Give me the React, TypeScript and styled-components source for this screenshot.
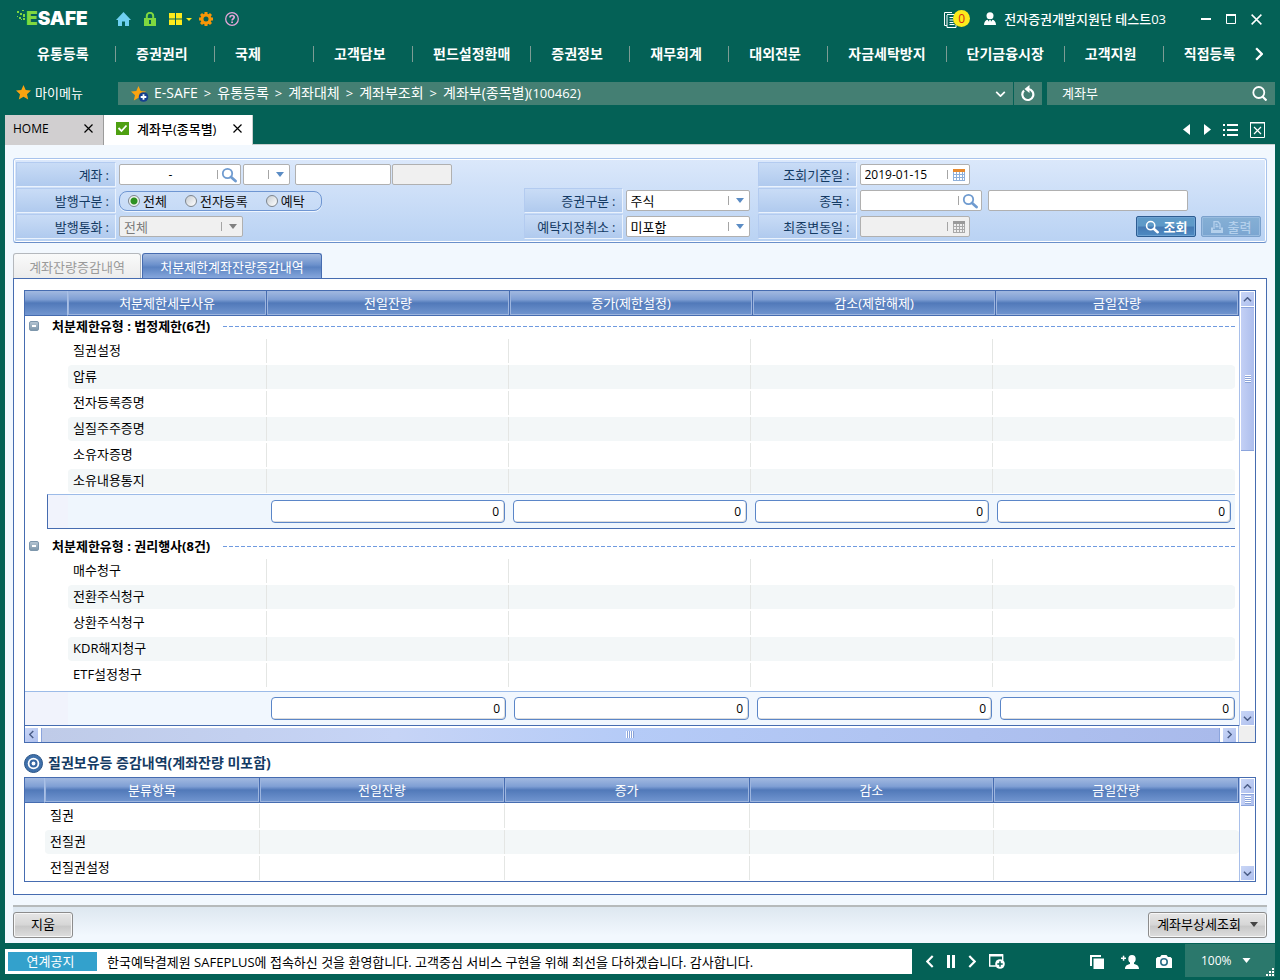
import React from "react";
import styled, { createGlobalStyle, css } from "styled-components";

const c = {
  green: "#046156",
  bar: "#447f73",
  line: "#466cb0",
  canvas: "#f2f8fe",
  stripe: "#f3f7f8",
  navy: "#133a63",
};

const GlobalStyle = createGlobalStyle`
  *, *::before, *::after { box-sizing: border-box; }
  body {
    margin: 0;
    background: ${c.green};
    font-family: "Open Sans", "Noto Sans CJK KR", sans-serif;
    font-size: 13px;
    line-height: 18px;
    color: #000;
  }
  button, input, select { font: inherit; color: inherit; margin: 0; }
  button { padding: 0; border: 0; background: none; cursor: pointer; }
  a { color: inherit; text-decoration: none; }
  svg { display: block; flex: none; }
  table { width: 100%; border-collapse: separate; border-spacing: 0; table-layout: fixed; }
  th, td { padding: 0; font-weight: 400; text-align: left; }
`;

/* ---------- shell ---------- */

const Page = styled.div`
  min-height: 100vh;
  display: flex;
  flex-direction: column;
  background: ${c.green};
`;

const TitleBar = styled.header`
  height: 38px;
  display: flex;
  align-items: center;
  justify-content: space-between;
  padding: 0 18px 0 17px;
  color: #fff;
`;

const Cluster = styled.div<{ $gap: number }>`
  display: flex;
  align-items: center;
  gap: ${(p) => p.$gap}px;
`;

const Logo = styled.a`
  display: flex;
  align-items: center;
  font-family: "Inter", sans-serif;
  font-weight: 900;
  font-size: 19px;
  line-height: 20px;
  color: #fff;
  margin-right: 16px;
  span { color: #7fd83f; }
`;

const IconButton = styled.button`
  display: flex;
  align-items: center;
  justify-content: center;
  gap: 4px;
  color: #fff;
`;

const LayoutButton = styled(IconButton)`
  margin-right: -5px;
`;

const DocsButton = styled(IconButton)`
  position: relative;
  width: 27px;
  height: 18px;
  justify-content: flex-start;
`;

const Badge = styled.span`
  position: absolute;
  right: 1px;
  top: 0;
  width: 17px;
  height: 17px;
  border-radius: 50%;
  background: #fdea1c;
  color: #d62a12;
  font-size: 12px;
  line-height: 17px;
  text-align: center;
`;

const UserName = styled.span`
  font-weight: 500;
  margin: 0 22px 0 -5px;
`;

const MenuBar = styled.nav`
  height: 34px;
  display: flex;
  align-items: center;
  justify-content: space-between;
  padding: 0 17px 2px 17px;
  color: #fff;
`;

const MenuList = styled.ul`
  display: flex;
  margin: 0;
  padding: 0;
  list-style: none;
`;

const MenuItem = styled.li`
  min-width: 99px;
  height: 16px;
  padding: 0 20px;
  border-right: 1px solid #7d9c94;
  font-size: 14px;
  line-height: 16px;
  font-weight: 700;
  white-space: nowrap;
  &:last-child { border-right: 0; min-width: 0; padding-right: 0; }
`;

const PathRow = styled.div`
  display: flex;
  height: 23px;
  margin: 10px 5px 0;
  color: #fff;
`;

const MyMenu = styled.button`
  width: 113px;
  display: flex;
  align-items: center;
  gap: 4px;
  padding: 0 0 2px 11px;
  color: #fff;
`;

const Crumbs = styled.div`
  flex: 1;
  display: flex;
  align-items: center;
  justify-content: space-between;
  background: ${c.bar};
  padding: 0 7px 0 13px;
  font-size: 14px;
`;

const CrumbList = styled.ol`
  display: flex;
  align-items: center;
  gap: 6px;
  margin: 0;
  padding: 0 0 2px;
  list-style: none;
  white-space: nowrap;
  li { display: flex; gap: 6px; }
  li + li::before { content: ">"; font-size: 13px; }
  small { font-size: 13px; }
`;

const Refresh = styled(IconButton)`
  width: 28px;
  margin-left: 1px;
  background: ${c.bar};
`;

const MenuSearch = styled.form`
  width: 228px;
  margin-left: 5px;
  padding: 0 8px 0 15px;
  display: flex;
  align-items: center;
  background: ${c.bar};
  input {
    flex: 1;
    min-width: 0;
    padding: 0 0 2px;
    border: 0;
    background: none;
    outline: none;
  }
`;

const TabStrip = styled.div`
  height: 30px;
  margin: 10px 5px 0;
  display: flex;
  justify-content: space-between;
  border-bottom: 1px solid #c9cfce;
`;

const PageTab = styled.div<{ $active?: boolean }>`
  height: 30px;
  width: ${(p) => (p.$active ? 149 : 99)}px;
  padding: 0 10px 2px ${(p) => (p.$active ? 12 : 8)}px;
  display: flex;
  align-items: center;
  justify-content: space-between;
  background: ${(p) => (p.$active ? "#fff" : "#d1cfd0")};
  border-right: 1px solid ${(p) => (p.$active ? "#c9cfce" : "#9b9b9b")};
  font-size: ${(p) => (p.$active ? 13 : 12)}px;
  font-weight: ${(p) => (p.$active ? 500 : 400)};
  button { color: #000; }
`;

const TabEnd = styled(IconButton)`
  margin-right: 10px;
`;

const Content = styled.main`
  flex: 1;
  display: flex;
  flex-direction: column;
  margin: 0 5px;
  padding: 13px 8px 0;
  background: ${c.canvas};
`;

/* ---------- search panel ---------- */

const Filters = styled.form`
  display: grid;
  grid-template-columns: 100px minmax(0, 1fr) 99px 135px 99px minmax(0, 1fr);
  grid-template-rows: 25px 25px 25px;
  row-gap: 1px;
  height: 85px;
  padding: 3px 2px;
  border: 1px solid #a8c3ec;
  border-bottom-color: #6a8fca;
  border-radius: 3px;
  box-shadow: inset 0 0 0 1px #fff;
  background: linear-gradient(#dbe8fb, #b9d2f3);
`;

const Label = styled.label`
  display: flex;
  align-items: center;
  justify-content: flex-end;
  padding-right: 6px;
  color: ${c.navy};
  background: linear-gradient(#c9dcf6, #b0caee);
  border: 1px solid #b3cbf0;
  border-right-color: #eaf2fd;
  border-bottom-color: #eaf2fd;
  span { margin-left: 3px; }
`;

const Cell = styled.div<{ $span?: number }>`
  display: flex;
  align-items: center;
  padding-left: 3px;
  grid-column: span ${(p) => p.$span ?? 1};
`;

const box = css<{ $off?: boolean }>`
  height: 21px;
  border: 1px solid #b0b0b0;
  border-radius: 2px;
  background: ${(p) => (p.$off ? "#f0f0f0" : "#fff")};
  color: ${(p) => (p.$off ? "#7c7c7c" : "#000")};
`;

const Field = styled.div<{ $w: number; $ml?: number; $off?: boolean }>`
  ${box}
  width: ${(p) => p.$w}px;
  margin-left: ${(p) => p.$ml ?? 0}px;
  display: flex;
  align-items: center;
  position: relative;
  padding-right: 3px;
  input {
    flex: 1;
    min-width: 0;
    height: 19px;
    padding: 0 0 0 4px;
    border: 0;
    background: none;
    outline: none;
    font-size: 12px;
  }
  select {
    width: 100%;
    height: 19px;
    padding: 0 0 0 4px;
    border: 0;
    background: none;
    outline: none;
    appearance: none;
    opacity: 1;
  }
`;

const AccountInput = styled.input`
  text-align: center;
`;

const TextInput = styled.input<{ $w: number; $ml?: number; $off?: boolean }>`
  ${box}
  width: ${(p) => p.$w}px;
  margin-left: ${(p) => p.$ml ?? 0}px;
  padding: 0 4px;
  outline: none;
`;

const Trigger = styled.button`
  display: flex;
  align-items: center;
  gap: 3px;
  height: 17px;
  &::before { content: ""; width: 1px; height: 9px; background: #a5a5a5; }
`;

const DateTrigger = styled(Trigger)`
  gap: 5px;
  padding-right: 1px;
`;

const Arrow = styled.span`
  position: absolute;
  right: 5px;
  top: 5px;
  display: flex;
  align-items: center;
  gap: 7px;
  pointer-events: none;
  &::before { content: ""; width: 1px; height: 9px; background: #a5a5a5; }
`;

const RadioGroup = styled.fieldset`
  display: flex;
  align-items: center;
  gap: 18px;
  width: 203px;
  height: 20px;
  margin: 0;
  padding: 0 0 0 8px;
  border: 1px solid #6f96d2;
  border-radius: 8px;
  box-shadow: 0 1px 0 #eef5fe;
  label { display: flex; align-items: center; gap: 3px; color: #111; }
`;

const Radio = styled.input`
  appearance: none;
  width: 12px;
  height: 12px;
  margin: 0;
  border-radius: 50%;
  border: 1px solid #7d858d;
  background: linear-gradient(135deg, #c7cdd3, #fff);
  &:checked { background: radial-gradient(circle, #2f9121 0 3px, #f1f4f1 4px); }
`;

const ActionButton = styled.button<{ $dim?: boolean }>`
  display: flex;
  align-items: center;
  justify-content: center;
  gap: 5px;
  width: 60px;
  height: 21px;
  border: 1px solid #2d5d92;
  border-radius: 2px;
  box-shadow: inset 0 0 0 1px #6fa3d3;
  background: linear-gradient(#5e9ac8 0 45%, #457ab4 55%, #4f8bc2);
  color: #fff;
  font-weight: 700;
  ${(p) =>
    p.$dim &&
    css`
      border-color: #7ba1cc;
      box-shadow: inset 0 0 0 1px #98bbdf;
      background: linear-gradient(#85b0d5, #7ba5d1);
      color: #b4d0ec;
      font-weight: 500;
    `}
`;

const Actions = styled.div`
  display: flex;
  gap: 5px;
  margin-left: auto;
  padding-right: 3px;
`;

/* ---------- inner tabs + panel ---------- */

const InnerTabs = styled.div`
  display: flex;
  gap: 1px;
  margin-top: 10px;
`;

const InnerTab = styled.button<{ $active?: boolean }>`
  width: ${(p) => (p.$active ? 180 : 128)}px;
  height: 25px;
  padding-top: 2px;
  border: 1px solid #b4b8bd;
  border-bottom: 0;
  border-radius: 3px 3px 0 0;
  background: linear-gradient(#f9fafa, #ececec);
  color: #9a9a9a;
  ${(p) =>
    p.$active &&
    css`
      border-color: ${c.line};
      background: linear-gradient(#a3bae0, #6c91cc 45%, #5a82c1 55%, #86a7dc);
      color: #fff;
    `}
`;

const Panel = styled.section`
  flex: 1;
  padding: 11px 10px 12px;
  border: 1px solid ${c.line};
  background: #fff;
`;

const GridFrame = styled.div`
  display: grid;
  grid-template-columns: minmax(0, 1fr) 16px;
  border: 1px solid ${c.line};
`;

const GridMain = styled.div`
  display: flex;
  flex-direction: column;
  min-width: 0;
`;

const HeadCell = styled.th<{ $first?: boolean }>`
  && { text-align: center; }
  height: 25px;
  background: linear-gradient(#a2b9e0, #7f9fd4 35%, #5179b9 50%, #7296d0);
  border-right: 1px solid ${(p) => (p.$first ? "#a9c0e6" : c.line)};
  border-bottom: 1px solid ${c.line};
  box-shadow: inset ${(p) => (p.$first ? "0 0 0 0" : "0 0 0 1px")} #9db5de;
  color: #fff;
`;

const BodyWrap = styled.div<{ $h?: number }>`
  padding-right: 4px;
  ${(p) => p.$h && `height: ${p.$h}px;`}
`;

const GroupCell = styled.td<{ $gap: number }>`
  && { padding-top: ${(p) => p.$gap}px; padding-left: 4px; }
`;

const GroupTitle = styled.div`
  display: flex;
  align-items: center;
  height: 22px;
  padding-bottom: 2px;
  font-weight: 700;
  span { margin: 0 13px; }
  &::after {
    content: "";
    flex: 1;
    height: 1px;
    background: repeating-linear-gradient(90deg, #6f9ae0 0 4px, #fff 4px 6px);
  }
`;

const Toggle = styled.button`
  width: 10px;
  height: 10px;
  display: flex;
  align-items: center;
  justify-content: center;
  border: 1px solid #7e97ac;
  border-radius: 2px;
  background: linear-gradient(#b4c4d2, #8098ac);
  &::before { content: ""; width: 4px; height: 2px; background: #fff; }
`;

const Row = styled.tr<{ $striped: boolean }>`
  td { height: 26px; padding-bottom: 2px; border: 0 solid #fff; border-width: 1px 0; background-clip: padding-box; }
  td + td { background-color: ${(p) => (p.$striped ? c.stripe : "#fff")}; padding-left: 5px; }
  td + td:nth-child(n + 2):not(:last-child) { box-shadow: inset -1px 0 0 #e4e6e4; }
  td:nth-child(2) { border-radius: 4px 0 0 4px; }
  td:last-child { border-radius: 0 4px 4px 0; }
`;

const SumRow = styled.tr`
  td + td {
    height: 35px;
    padding: 0 4px;
    background: #eff6fd;
    border-top: 1px solid #9cbbe8;
    border-bottom: 1px solid ${c.line};
  }
`;

const SumStart = styled.div`
  height: 35px;
  margin-left: 22px;
  background: #f1f3fc;
  border: 1px solid ${c.line};
  border-top-color: #9cbbe8;
  border-right: 0;
`;

const SumInput = styled.input`
  display: block;
  width: 100%;
  height: 23px;
  padding: 0 5px;
  border: 1px solid #5b86c8;
  border-radius: 4px;
  box-shadow: inset -1px -1px 0 #dcdcdc;
  background: #fff;
  outline: none;
  text-align: right;
  font-size: 12px;
`;

const FootTable = styled.table`
  td {
    height: 35px;
    padding: 0 4px;
    background: #f1f7fe;
    border-top: 1px solid #9cbbe8;
    border-bottom: 1px solid ${c.line};
  }
  td:first-child { background: #f1f3fc; }
`;

/* ---------- scrollbars ---------- */

const VBar = styled.div`
  display: flex;
  flex-direction: column;
  border-left: 1px solid #a9c0ea;
  padding: 1px;
  gap: 1px;
`;

const ScrollButton = styled.button`
  width: 13px;
  height: 14px;
  flex: none;
  display: flex;
  align-items: center;
  justify-content: center;
  background: linear-gradient(135deg, #c9d6f6, #aebfee);
  color: #4a5c86;
`;

const VThumb = styled.div<{ $h: number }>`
  width: 13px;
  height: ${(p) => p.$h}px;
  display: flex;
  align-items: center;
  justify-content: center;
  border: 0 solid #8ba4dc;
  border-width: 1px 0;
  background: linear-gradient(90deg, #c3d0f5, #adbeed);
`;

const Spacer = styled.div`
  flex: 1;
`;

const HBar = styled.div`
  display: flex;
  align-items: center;
  gap: 3px;
  height: 16px;
  padding: 1px 2px 0 0;
  border-right: 1px solid #a9c0ea;
`;

const HThumb = styled.div`
  flex: 1;
  height: 14px;
  display: flex;
  align-items: center;
  justify-content: center;
  border: 0 solid #8ba4dc;
  border-width: 0 1px;
  background: linear-gradient(90deg, #bfcbe8, #c6d4f6 30%, #b5cbf7 50%, #a9baeb);
`;

const Corner = styled.div`
  background: #efefef;
`;

const SectionTitle = styled.h2`
  display: flex;
  align-items: center;
  gap: 5px;
  height: 34px;
  margin: 0;
  padding-top: 6px;
  font-size: 14px;
  font-weight: 700;
  color: ${c.navy};
`;

const CommandBar = styled.div`
  display: flex;
  justify-content: space-between;
  height: 38px;
  margin-top: 10px;
  padding-top: 5px;
  border-top: 2px solid #b6babb;
  background: linear-gradient(#dde7f0, #f2f8fe 80%);
`;

const GrayButton = styled.button<{ $w: number }>`
  width: ${(p) => p.$w}px;
  height: 26px;
  display: flex;
  align-items: center;
  justify-content: center;
  gap: 9px;
  padding-bottom: 2px;
  border: 1px solid #8c8c8c;
  border-radius: 3px;
  box-shadow: inset 0 0 0 1px #f7f7f7;
  background: linear-gradient(#e6e6e6, #d6d6d6 50%, #c8c8c8 55%, #dedede);
`;

/* ---------- status bar ---------- */

const StatusBar = styled.footer`
  display: flex;
  align-items: center;
  height: 37px;
  padding: 0 5px;
  color: #fff;
`;

const Notice = styled.div`
  flex: 1;
  min-width: 0;
  display: flex;
  align-items: center;
  height: 25px;
  padding: 0 3px;
  background: #fff;
  color: #000;
  white-space: nowrap;
  overflow: hidden;
  strong {
    width: 89px;
    margin-right: 10px;
    padding-right: 4px;
    background: #33a1cc;
    color: #fff;
    font-weight: 400;
    line-height: 19px;
    text-align: center;
  }
`;

const NoticeControls = styled.div`
  display: flex;
  align-items: center;
  gap: 13px;
  width: 178px;
  padding-left: 14px;
`;

const StatusTools = styled.div`
  display: flex;
  align-items: center;
  gap: 17px;
  width: 95px;
`;

const ZoomBox = styled.button`
  align-self: flex-start;
  position: relative;
  display: flex;
  align-items: center;
  gap: 10px;
  width: 90px;
  height: 33px;
  margin-top: 1px;
  padding-left: 16px;
  background: #2b786c;
  color: #fff;
  font-size: 12px;
`;

const ResizeGrip = styled.svg`
  position: absolute;
  right: 0;
  bottom: 0;
`;

/* ---------- icons ---------- */

const Caret = ({ fill = "#5b8cc4", w = 8 }: { fill?: string; w?: number }) => (
  <svg width={w} height="5" viewBox="0 0 8 5"><path d="M0 0h8L4 5z" fill={fill} /></svg>
);

const Cross = ({ s = 9 }: { s?: number }) => (
  <svg width={s} height={s} viewBox="0 0 9 9"><path d="M.5.5l8 8M8.5.5l-8 8" stroke="currentColor" strokeWidth="1.2" /></svg>
);

const Chevron = ({ dir, w = 8, sw = 2 }: { dir: "up" | "down" | "left" | "right"; w?: number; sw?: number }) => {
  const vertical = dir === "up" || dir === "down";
  const d = {
    up: "M1 6l5-5 5 5",
    down: "M1 1l5 5 5-5",
    left: "M6 1L1 6l5 5",
    right: "M1 1l5 5-5 5",
  }[dir];
  return (
    <svg width={vertical ? w : Math.round((w * 7) / 12)} height={vertical ? Math.round((w * 7) / 12) : w} viewBox={vertical ? "0 0 12 7" : "0 0 7 12"}>
      <path d={d} fill="none" stroke="currentColor" strokeWidth={sw} />
    </svg>
  );
};

const Magnifier = ({ color, s = 16 }: { color: string; s?: number }) => (
  <svg width={s} height={s} viewBox="0 0 16 16" fill="none" stroke={color}>
    <circle cx="6.5" cy="6.5" r="4.7" strokeWidth="1.8" />
    <path d="M10 10l4.5 4" strokeWidth="2.8" strokeLinecap="round" />
  </svg>
);

const Calendar = ({ off }: { off?: boolean }) => (
  <svg width="12" height="12" viewBox="0 0 12 12">
    <path d="M0 0h12v12H0z" fill={off ? "#a9a9a9" : "#8fb0da"} />
    <path d="M0 0h12v3H0z" fill={off ? "#9a9a9a" : "#e88a2e"} />
    <path d="M1 3h2v2H1zm3 0h2v2H4zm3 0h2v2H7zm3 0h1v2h-1zM1 6h2v2H1zm3 0h2v2H4zm3 0h2v2H7zm3 0h1v2h-1zM1 9h2v2H1zm3 0h2v2H4zm3 0h2v2H7zm3 0h1v2h-1z" fill={off ? "#efefef" : "#fff"} />
  </svg>
);

const Star = ({ plus }: { plus?: boolean }) => (
  <svg width={plus ? 18 : 15} height={plus ? 16 : 15} viewBox={plus ? "0 0 18 16" : "0 0 15 15"}>
    <path d="M7.5 0l2.2 5 5.3.5-4 3.7 1.2 5.3-4.7-2.8-4.7 2.8L4 9.2 0 5.5 5.3 5z" fill="#fba310" />
    {plus && (
      <>
        <circle cx="12.5" cy="11" r="4.8" fill="#16408f" />
        <path d="M12.5 8.2v5.6M9.7 11h5.6" stroke="#fff" strokeWidth="1.8" />
      </>
    )}
  </svg>
);

const Grip = ({ vertical }: { vertical?: boolean }) => (
  <svg width={vertical ? 6 : 9} height={vertical ? 9 : 7} viewBox={vertical ? "0 0 6 9" : "0 0 9 7"}>
    <path d={vertical ? "M0 .5h6M0 2.5h6M0 4.5h6M0 6.5h6" : "M.5 0v7M2.5 0v7M4.5 0v7M6.5 0v7"} stroke="#fff" />
    <path d={vertical ? "M0 1.5h6M0 3.5h6M0 5.5h6M0 7.5h6" : "M1.5 0v7M3.5 0v7M5.5 0v7M7.5 0v7"} stroke="#8aa3d8" />
  </svg>
);

/* ---------- data ---------- */

const menus = ["유통등록", "증권권리", "국제", "고객담보", "펀드설정환매", "증권정보", "재무회계", "대외전문", "자금세탁방지", "단기금융시장", "고객지원", "직접등록"];

const groups = [
  { title: "처분제한유형 : 법정제한(6건)", gap: 0, sum: true, rows: ["질권설정", "압류", "전자등록증명", "실질주주증명", "소유자증명", "소유내용통지"] },
  { title: "처분제한유형 : 권리행사(8건)", gap: 7, sum: false, rows: ["매수청구", "전환주식청구", "상환주식청구", "KDR해지청구", "ETF설정청구"] },
];

const amountCols = [0, 1, 2, 3];

const Colon = () => <span>:</span>;

const Select = ({ id, w, off, options }: { id: string; w: number; off?: boolean; options: string[] }) => (
  <Field $w={w} $off={off}>
    <select id={id} disabled={off}>
      {options.map((o) => <option key={o}>{o}</option>)}
    </select>
    <Arrow><Caret fill={off ? "#808080" : "#5b8cc4"} /></Arrow>
  </Field>
);

const Cols = ({ first, second }: { first: number; second: number }) => (
  <colgroup>
    <col style={{ width: first }} />
    <col style={{ width: second }} />
    {amountCols.map((i) => <col key={i} />)}
  </colgroup>
);

const GridHead = ({ first, second, titles }: { first: number; second: number; titles: string[] }) => (
  <table>
    <Cols first={first} second={second} />
    <thead>
      <tr>
        <HeadCell $first aria-label="구분" />
        {titles.map((t) => <HeadCell key={t}>{t}</HeadCell>)}
      </tr>
    </thead>
  </table>
);

const DataRow = ({ name, striped }: { name: string; striped: boolean }) => (
  <Row $striped={striped}>
    <td />
    <td>{name}</td>
    {amountCols.map((i) => <td key={i} />)}
  </Row>
);

const VScroll = ({ thumb }: { thumb: number }) => (
  <VBar>
    <ScrollButton aria-label="위로"><Chevron dir="up" w={9} /></ScrollButton>
    <VThumb $h={thumb}><Grip vertical /></VThumb>
    <Spacer />
    <ScrollButton aria-label="아래로"><Chevron dir="down" w={9} /></ScrollButton>
  </VBar>
);

export default function App() {
  return (
    <Page>
      <GlobalStyle />
      <TitleBar>
        <Cluster $gap={12}>
          <Logo href="#">
            <svg width="9" height="18" viewBox="0 0 9 18" fill="#7fd83f">
              <path d="M0 1h2v2H0zM3 3h2v2H3zM0 6h1v1H0zM2 7h2v2H2zM5 0h2v1H5zM6 4h2v3H6zM4 9h1v1H4zM6 8h2v2H6z" />
            </svg>
            <span>E</span>SAFE
          </Logo>
          <IconButton aria-label="홈">
            <svg width="15" height="15" viewBox="0 0 15 15"><path d="M7.5 0L15 8h-2v6H9V9.500H6V14H2V8H0z" fill="#6fd0f2" /></svg>
          </IconButton>
          <IconButton aria-label="잠금">
            <svg width="14" height="15" viewBox="0 0 14 15">
              <path d="M3.8 7V4a3.200 3.200 0 0 1 6.400 0v3" fill="none" stroke="#7fd83f" strokeWidth="2" />
              <path d="M1 6h12v8H1z" fill="#7fd83f" /><path d="M6 8h2v4H6z" fill={c.green} />
            </svg>
          </IconButton>
          <LayoutButton aria-label="화면 배치">
            <svg width="13" height="12" viewBox="0 0 13 12"><path d="M0 0h6v5.500H0zm7 0h6v5.500H7zM0 6.500h6V12H0zm7 0h6V12H7z" fill="#fdea1c" /></svg>
            <svg width="6" height="3" viewBox="0 0 6 3"><path d="M0 0h6L3 3z" fill="#fdea1c" /></svg>
          </LayoutButton>
          <IconButton aria-label="설정">
            <svg width="14" height="14" viewBox="0 0 14 14">
              <circle cx="7" cy="7" r="4" fill="none" stroke="#f79608" strokeWidth="3" />
              <path d="M7 0v2.500M7 11.500V14M0 7h2.500M11.500 7H14M2 2l2 2M10 10l2 2M12 2l-2 2M4 10l-2 2" stroke="#f79608" strokeWidth="3" />
            </svg>
          </IconButton>
          <IconButton aria-label="도움말">
            <svg width="14" height="14" viewBox="0 0 14 14" fill="none">
              <circle cx="7" cy="7" r="6.300" stroke="#e3a6d8" strokeWidth="1.300" />
              <path d="M5 5.500C5 4.200 6 3.500 7.100 3.500S9.200 4.200 9.200 5.300C9.200 6.700 7.100 6.800 7.100 8.500" stroke="#e3a6d8" strokeWidth="1.700" />
              <path d="M6.200 9.500H8v1.600H6.200z" fill="#e3a6d8" />
            </svg>
          </IconButton>
        </Cluster>
        <Cluster $gap={13}>
          <DocsButton aria-label="알림 문서">
            <svg width="15" height="17" viewBox="0 0 15 17" fill="none" stroke="#fff">
              <path d="M8 1.500H.5v13H3M3 4v12.500h9V14M3 3.500h8M5.500 6.500h4M5.500 9h4M5.500 11.500h4M5.500 13.500h5" />
            </svg>
            <Badge>0</Badge>
          </DocsButton>
          <svg width="12" height="14" viewBox="0 0 12 14" fill="#fff">
            <circle cx="6" cy="3.800" r="3.500" />
            <path d="M0 13c0-3 1.500-5 3.500-5.300L6 11l2.500-3.300C10.500 8 12 10 12 13z" /><path d="M5.300 8h1.400l.5 3L6 13l-1.200-2z" />
          </svg>
          <UserName>전자증권개발지원단 테스트03</UserName>
          <Cluster $gap={15}>
            <IconButton aria-label="최소화"><svg width="10" height="10" viewBox="0 0 10 10"><path d="M0 4h10v2H0z" fill="#fff" /></svg></IconButton>
            <IconButton aria-label="최대화"><svg width="10" height="10" viewBox="0 0 10 10"><path d="M.5 1h9v8.500h-9z" fill="none" stroke="#fff" /><path d="M0 0h10v2H0z" fill="#fff" /></svg></IconButton>
            <IconButton aria-label="닫기"><Cross s={11} /></IconButton>
          </Cluster>
        </Cluster>
      </TitleBar>

      <MenuBar>
        <MenuList>
          {menus.map((m) => <MenuItem key={m}><a href="#">{m}</a></MenuItem>)}
        </MenuList>
        <IconButton aria-label="다음 메뉴"><Chevron dir="right" w={14} /></IconButton>
      </MenuBar>

      <PathRow>
        <MyMenu><Star />마이메뉴</MyMenu>
        <Crumbs>
          <Cluster $gap={5}>
            <Star plus />
            <CrumbList>
              <li>E-SAFE</li>
              <li>유통등록</li>
              <li>계좌대체</li>
              <li>계좌부조회</li>
              <li><span>계좌부(종목별)<small>(100462)</small></span></li>
            </CrumbList>
          </Cluster>
          <IconButton aria-label="경로 열기"><Chevron dir="down" w={11} /></IconButton>
        </Crumbs>
        <Refresh aria-label="새로고침">
          <svg width="14" height="17" viewBox="0 0 14 17">
            <path d="M3 5.500A5.500 5.500 0 1 0 7.500 4" fill="none" stroke="#fff" strokeWidth="2.200" />
            <path d="M3.500 4L8.500 0v8z" fill="#fff" />
          </svg>
        </Refresh>
        <MenuSearch>
          <input aria-label="메뉴 검색" defaultValue="계좌부" />
          <IconButton type="button" aria-label="검색">
            <svg width="15" height="15" viewBox="0 0 15 15" fill="none" stroke="#fff">
              <circle cx="6.800" cy="6.500" r="5.500" strokeWidth="1.800" /><path d="M10.500 10.500l4 4" strokeWidth="2.200" />
            </svg>
          </IconButton>
        </MenuSearch>
      </PathRow>

      <TabStrip>
        <Cluster $gap={0}>
          <PageTab>HOME<IconButton aria-label="HOME 닫기"><Cross /></IconButton></PageTab>
          <PageTab $active>
            <Cluster $gap={8}>
              <svg width="13" height="13" viewBox="0 0 13 13"><path d="M0 0h13v13H0z" fill="#4ea011" /><path d="M2.500 6l3 3 5-5.500" fill="none" stroke="#fff" strokeWidth="1.800" /></svg>
              계좌부(종목별)
            </Cluster>
            <IconButton aria-label="탭 닫기"><Cross /></IconButton>
          </PageTab>
        </Cluster>
        <Cluster $gap={12}>
          <IconButton aria-label="이전 탭"><svg width="7" height="11" viewBox="0 0 7 11"><path d="M7 0v11L0 5.500z" fill="#fff" /></svg></IconButton>
          <IconButton aria-label="다음 탭"><svg width="9" height="11" viewBox="-2 0 9 11"><path d="M0 0v11l7-5.500z" fill="#fff" /></svg></IconButton>
          <IconButton aria-label="탭 목록"><svg width="15" height="12" viewBox="0 0 15 12"><path d="M0 0h2v2H0zm4 0h11v2H4zM0 5h2v2H0zm4 0h11v2H4zM0 10h2v2H0zm4 0h11v2H4z" fill="#fff" /></svg></IconButton>
          <TabEnd aria-label="모두 닫기"><svg width="15" height="16" viewBox="0 0 15 16" fill="none" stroke="#fff"><path d="M.5 1h14v14.500H.5z" /><path d="M0 .5h15M4 5l7 7M11 5l-7 7" strokeWidth="1.200" /></svg></TabEnd>
        </Cluster>
      </TabStrip>

      <Content>
        <Filters>
          <Label htmlFor="acct">계좌<Colon /></Label>
          <Cell $span={3}>
            <Field $w={122}>
              <AccountInput id="acct" defaultValue="-" />
              <Trigger type="button" aria-label="계좌 찾기"><Magnifier color="#6f9bd0" /></Trigger>
            </Field>
            <Field $w={47} $ml={2}>
              <select aria-label="계좌 구분"><option> </option></select>
              <Arrow><Caret /></Arrow>
            </Field>
            <TextInput $w={96} $ml={5} aria-label="계좌명" />
            <TextInput $w={60} $ml={1} $off readOnly aria-label="계좌 상태" />
          </Cell>
          <Label htmlFor="base">조회기준일<Colon /></Label>
          <Cell>
            <Field $w={110}>
              <input id="base" defaultValue="2019-01-15" />
              <DateTrigger type="button" aria-label="달력"><Calendar /></DateTrigger>
            </Field>
          </Cell>

          <Label as="div">발행구분<Colon /></Label>
          <Cell>
            <RadioGroup aria-label="발행구분">
              {["전체", "전자등록", "예탁"].map((t, i) => (
                <label key={t}><Radio type="radio" name="issue" defaultChecked={i === 0} />{t}</label>
              ))}
            </RadioGroup>
          </Cell>
          <Label htmlFor="kind">증권구분<Colon /></Label>
          <Cell><Select id="kind" w={124} options={["주식"]} /></Cell>
          <Label htmlFor="item">종목<Colon /></Label>
          <Cell>
            <Field $w={122}>
              <input id="item" />
              <Trigger type="button" aria-label="종목 찾기"><Magnifier color="#6f9bd0" /></Trigger>
            </Field>
            <TextInput $w={200} $ml={6} aria-label="종목명" />
          </Cell>

          <Label htmlFor="currency">발행통화<Colon /></Label>
          <Cell><Select id="currency" w={124} off options={["전체"]} /></Cell>
          <Label htmlFor="cancel">예탁지정취소<Colon /></Label>
          <Cell><Select id="cancel" w={124} options={["미포함"]} /></Cell>
          <Label htmlFor="last">최종변동일<Colon /></Label>
          <Cell>
            <Field $w={110} $off>
              <input id="last" disabled />
              <DateTrigger type="button" disabled aria-label="변동일 달력"><Calendar off /></DateTrigger>
            </Field>
            <Actions>
              <ActionButton type="button"><Magnifier color="#fff" s={14} />조회</ActionButton>
              <ActionButton type="button" $dim disabled>
                <svg width="12" height="12" viewBox="0 0 12 12" fill="none" stroke="currentColor">
                  <path d="M3 8V.7h4L9 3v5M4.500 3.500h2M4.500 5.500h3" strokeWidth="1.300" /><path d="M0 6.500h2V9h8V6.500h2V12H0z" fill="currentColor" stroke="none" />
                </svg>
                출력
              </ActionButton>
            </Actions>
          </Cell>
        </Filters>

        <InnerTabs>
          <InnerTab>계좌잔량증감내역</InnerTab>
          <InnerTab $active>처분제한계좌잔량증감내역</InnerTab>
        </InnerTabs>

        <Panel>
          <GridFrame>
            <GridMain>
              <GridHead first={43} second={199} titles={["처분제한세부사유", "전일잔량", "증가(제한설정)", "감소(제한해제)", "금일잔량"]} />
              <BodyWrap $h={375}>
                <table>
                  <Cols first={43} second={199} />
                  {groups.map((g) => (
                    <tbody key={g.title}>
                      <tr>
                        <GroupCell colSpan={6} $gap={g.gap}>
                          <GroupTitle><Toggle aria-label="접기" /><span>{g.title}</span></GroupTitle>
                        </GroupCell>
                      </tr>
                      {g.rows.map((r, i) => <DataRow key={r} name={r} striped={i % 2 === 1} />)}
                      {g.sum && (
                        <SumRow>
                          <td><SumStart /></td>
                          <td />
                          {amountCols.map((i) => <td key={i}><SumInput readOnly value="0" aria-label="소계" /></td>)}
                        </SumRow>
                      )}
                    </tbody>
                  ))}
                </table>
              </BodyWrap>
              <FootTable>
                <Cols first={43} second={199} />
                <tbody>
                  <tr>
                    <td /><td />
                    {amountCols.map((i) => <td key={i}><SumInput readOnly value="0" aria-label="합계" /></td>)}
                  </tr>
                </tbody>
              </FootTable>
            </GridMain>
            <VScroll thumb={144} />
            <HBar>
              <ScrollButton aria-label="왼쪽으로"><Chevron dir="left" w={9} /></ScrollButton>
              <HThumb><Grip /></HThumb>
              <ScrollButton aria-label="오른쪽으로"><Chevron dir="right" w={9} /></ScrollButton>
            </HBar>
            <Corner />
          </GridFrame>

          <SectionTitle>
            <svg width="19" height="19" viewBox="0 0 19 19">
              <circle cx="9.500" cy="9.500" r="9" fill="#3f70aa" stroke="#2b5587" />
              <circle cx="9.500" cy="9.500" r="5.800" fill="#fff" />
              <circle cx="9.500" cy="9.500" r="4" fill="#3566a2" />
              <circle cx="9.500" cy="9.500" r="1.900" fill="#fff" />
            </svg>
            질권보유등 증감내역(계좌잔량 미포함)
          </SectionTitle>

          <GridFrame>
            <GridMain>
              <GridHead first={20} second={215} titles={["분류항목", "전일잔량", "증가", "감소", "금일잔량"]} />
              <table>
                <Cols first={20} second={215} />
                <tbody>
                  {["질권", "전질권", "전질권설정"].map((r, i) => <DataRow key={r} name={r} striped={i === 1} />)}
                </tbody>
              </table>
            </GridMain>
            <VScroll thumb={12} />
          </GridFrame>
        </Panel>

        <CommandBar>
          <GrayButton $w={60}>지움</GrayButton>
          <GrayButton $w={119}>계좌부상세조회<Caret fill="#444" /></GrayButton>
        </CommandBar>
      </Content>

      <StatusBar>
        <Notice>
          <strong>연계공지</strong>
          한국예탁결제원 SAFEPLUS에 접속하신 것을 환영합니다. 고객중심 서비스 구현을 위해 최선을 다하겠습니다. 감사합니다.
        </Notice>
        <NoticeControls>
          <IconButton aria-label="이전 공지"><Chevron dir="left" w={13} /></IconButton>
          <IconButton aria-label="일시정지"><svg width="8" height="13" viewBox="0 0 8 13"><path d="M0 0h3v13H0zm5 0h3v13H5z" fill="#fff" /></svg></IconButton>
          <IconButton aria-label="다음 공지"><Chevron dir="right" w={13} /></IconButton>
          <IconButton aria-label="공지 추가">
            <svg width="16" height="15" viewBox="0 0 16 15"><path d="M7 12H.7V1h13v5" fill="none" stroke="#fff" strokeWidth="1.400" /><path d="M0 0h14v2.500H0z" fill="#fff" /><circle cx="11" cy="10" r="4.800" fill="#fff" /><path d="M11 7.300v5.400M8.300 10h5.400" stroke={c.green} strokeWidth="1.500" /></svg>
          </IconButton>
        </NoticeControls>
        <StatusTools>
          <IconButton aria-label="복사"><svg width="14" height="14" viewBox="0 0 14 14" fill="#fff"><path d="M0 0h11v2H2v9H0z" /><path d="M3.500 3.500H14V14H3.500z" /></svg></IconButton>
          <IconButton aria-label="사용자 추가"><svg width="18" height="14" viewBox="0 0 18 14" fill="#fff"><path d="M0 2.500h5v1.500H0z" /><path d="M1.800.7h1.500v5H1.800z" /><ellipse cx="11" cy="4" rx="3.700" ry="4" /><path d="M4 14c0-3.500 2-4 5-5V7h4v2c3 1 5 1.500 5 5z" /></svg></IconButton>
          <IconButton aria-label="화면 캡처"><svg width="16" height="13" viewBox="0 0 16 13"><path d="M1.500 2H4l1.500-2h5L12 2h2.500L16 3.500V13H0V3.500z" fill="#fff" /><circle cx="8" cy="7" r="3.200" fill="none" stroke="#2b6f8a" strokeWidth="1.600" /></svg></IconButton>
        </StatusTools>
        <ZoomBox>
          100%<Caret fill="#fff" w={9} />
          <ResizeGrip width="9" height="9" viewBox="0 0 9 9" fill="#fff"><path d="M6 0h2v2H6zM3 3h2v2H3zM6 3h2v2H6zM0 6h2v2H0zM3 6h2v2H3zM6 6h2v2H6z" /></ResizeGrip>
        </ZoomBox>
      </StatusBar>
    </Page>
  );
}
